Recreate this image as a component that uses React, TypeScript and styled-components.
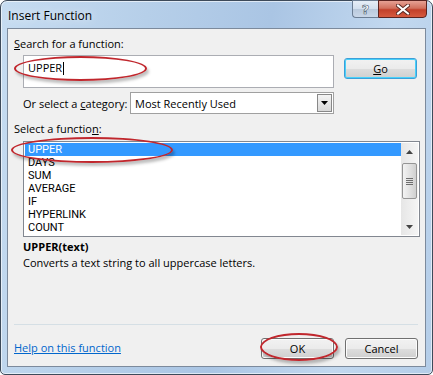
import React from 'react'
import styled, { createGlobalStyle } from 'styled-components';

const Global = createGlobalStyle`
    html, body {
        margin: 0;
        padding: 0;
        background: #ffffff;
    }
    body {
        font-family: "Open Sans", "Noto Sans", sans-serif;
        font-size: 11px;
        color: #000;
    }
`;

const functions = ['UPPER', 'DAYS', 'SUM', 'AVERAGE', 'IF', 'HYPERLINK', 'COUNT'];

const App = () => {
  return (
    <>
      <Global />
      <Window>
        <TitleBar>
          <Title>Insert Function</Title>
          <Caption>
            <CaptionButton>?</CaptionButton>
            <CloseButton>
              <svg width="14" height="11" viewBox="0 0 14 11">
                <path d="M2 1.5 L12 9.5 M12 1.5 L2 9.5" stroke="#5a2a24" strokeWidth="4" strokeLinecap="square" />
                <path d="M2 1.5 L12 9.5 M12 1.5 L2 9.5" stroke="#fff" strokeWidth="2" strokeLinecap="square" />
              </svg>
            </CloseButton>
          </Caption>
        </TitleBar>
        <Client>
          <Label><u>S</u>earch for a function:</Label>
          <SearchRow>
            <SearchBox>
              <SearchText>UPPER<Caret /></SearchText>
              <Ellipse $left={-10} $top={0} $width={133} $height={25} />
            </SearchBox>
            <Button $focused><u>G</u>o</Button>
          </SearchRow>
          <CategoryRow>
            <span>Or select a <u>c</u>ategory:</span>
            <Select>
              <SelectText>Most Recently Used</SelectText>
              <DropButton>
                <svg width="7" height="4" viewBox="0 0 7 4"><path d="M0 0 H7 L3.5 4 Z" fill="#000" /></svg>
              </DropButton>
            </Select>
          </CategoryRow>
          <Label $top={7}>Select a functio<u>n</u>:</Label>
          <ListBox>
            <Rows>
              {functions.map((f, i) => (
                <Row key={f} $selected={i === 0}>{f}</Row>
              ))}
              <Ellipse $left={-14} $top={-6} $width={162} $height={26} />
            </Rows>
            <ScrollBar>
              <Arrow>
                <svg width="7" height="4" viewBox="0 0 7 4"><path d="M0 4 H7 L3.5 0 Z" fill="#444" /></svg>
              </Arrow>
              <Track>
                <Thumb>
                  <Grip />
                  <Grip />
                  <Grip />
                  <Grip />
                </Thumb>
              </Track>
              <Arrow>
                <svg width="7" height="4" viewBox="0 0 7 4"><path d="M0 0 H7 L3.5 4 Z" fill="#444" /></svg>
              </Arrow>
            </ScrollBar>
          </ListBox>
          <Signature>UPPER(text)</Signature>
          <Description>Converts a text string to all uppercase letters.</Description>
          <Spacer />
          <Separator />
          <Footer>
            <HelpLink href="#">Help on this function</HelpLink>
            <Buttons>
              <OkWrap>
                <Button>OK</Button>
                <Ellipse $left={-1} $top={-5} $width={78} $height={28} />
              </OkWrap>
              <Button>Cancel</Button>
            </Buttons>
          </Footer>
        </Client>
      </Window>
    </>
  )
}

export default App;

const Window = styled.div`
    width: 433px;
    height: 375px;
    box-sizing: border-box;
    border: 1px solid #3d4a5a;
    border-radius: 7px 7px 5px 5px;
    background: linear-gradient(100deg, #c6dcf1 0%, #b6cfe9 30%, #aac5e4 55%, #c2d8ef 80%, #b4cde8 100%);
    padding: 0 6px 7px 6px;
    display: flex;
    flex-direction: column;
    box-shadow: inset 0 0 0 1px rgba(255,255,255,0.6);
`;
const TitleBar = styled.div`
    height: 27px;
    display: flex;
    justify-content: space-between;
    align-items: flex-start;
`;
const Title = styled.div`
    padding: 6px 0 0 1px;
    font-family: "Open Sans", "Noto Sans", sans-serif;
    font-size: 12px;
    color: #000;
    text-shadow: 0 0 8px rgba(255,255,255,0.9);
`;
const Caption = styled.div`
    display: flex;
    margin-top: -1px;
    margin-right: -1px;
`;
const CaptionButton = styled.div`
    width: 26px;
    height: 18px;
    box-sizing: border-box;
    border: 1px solid #6b7d93;
    border-right: none;
    border-radius: 0 0 0 4px;
    background: linear-gradient(#e6eef7 0%, #d2dfee 50%, #b9c9dc 51%, #c9d7e8 100%);
    display: flex;
    align-items: center;
    justify-content: center;
    font-family: "DejaVu Sans", sans-serif;
    font-size: 13px;
    font-weight: bold;
    color: #fff;
    -webkit-text-stroke: 0.6px #4a5a6e;
`;
const CloseButton = styled.div`
    width: 49px;
    height: 18px;
    box-sizing: border-box;
    border: 1px solid #5a2320;
    border-radius: 0 0 4px 0;
    background: linear-gradient(#e6a194 0%, #d1705d 45%, #c2402a 55%, #d65a3f 100%);
    display: flex;
    align-items: center;
    justify-content: center;
`;
const Client = styled.div`
    flex: 1;
    border: 1px solid #7c8a9c;
    background: #f0f0f0;
    padding: 0 6px 0 6px;
    display: flex;
    flex-direction: column;
`;
const Label = styled.div<{ $top?: number }>`
    margin-top: ${p => p.$top ?? 7}px;
    line-height: 16px;
`;
const SearchRow = styled.div`
    display: flex;
    align-items: flex-start;
    margin-top: 3px;
    padding-left: 9px;
    gap: 10px;
`;
const SearchBox = styled.div`
    position: relative;
    width: 311px;
    height: 33px;
    box-sizing: border-box;
    border: 1px solid #abadb3;
    background: #fff;
`;
const SearchText = styled.div`
    padding: 4px 0 0 4px;
    line-height: 16px;
    display: flex;
    align-items: center;
`;
const Caret = styled.span`
    display: inline-block;
    width: 1px;
    height: 13px;
    background: #000;
    margin-left: 1px;
`;
const Ellipse = styled.div<{ $left: number; $top: number; $width: number; $height: number }>`
    position: absolute;
    left: ${p => p.$left}px;
    top: ${p => p.$top}px;
    width: ${p => p.$width}px;
    height: ${p => p.$height}px;
    box-sizing: border-box;
    border: 2px solid #c0272d;
    border-radius: 50%;
    box-shadow: 2px 3px 3px rgba(0,0,0,0.25);
    pointer-events: none;
`;
const Button = styled.div<{ $focused?: boolean }>`
    width: 73px;
    height: 21px;
    box-sizing: border-box;
    border: 1px solid ${p => p.$focused ? '#3c9fd8' : '#707070'};
    border-radius: 3px;
    background: linear-gradient(#f2f2f2 0%, #ebebeb 50%, #dddddd 51%, #cfcfcf 100%);
    box-shadow: inset 0 0 0 1px ${p => p.$focused ? '#48d1fa' : '#fcfcfc'};
    display: flex;
    align-items: center;
    justify-content: center;
    margin-top: ${p => p.$focused ? '3px' : '0'};
`;
const CategoryRow = styled.div`
    width: 311px;
    display: flex;
    align-items: center;
    justify-content: space-between;
    margin-top: 4px;
    margin-left: 9px;
`;
const Select = styled.div`
    width: 204px;
    height: 22px;
    box-sizing: border-box;
    border: 1px solid #a0a0a0;
    background: #fff;
    display: flex;
    align-items: center;
    justify-content: space-between;
    padding: 1px;
`;
const SelectText = styled.span`
    padding-left: 3px;
`;
const DropButton = styled.div`
    width: 15px;
    height: 18px;
    box-sizing: border-box;
    border: 1px solid #888;
    background: linear-gradient(#f4f4f4, #d8d8d8);
    display: flex;
    align-items: center;
    justify-content: center;
`;
const ListBox = styled.div`
    margin: 4px 0 0 9px;
    width: 397px;
    height: 96px;
    box-sizing: border-box;
    border: 1px solid #828790;
    background: #fff;
    display: flex;
    padding: 1px;
`;
const Rows = styled.div`
    position: relative;
    flex: 1;
    display: flex;
    flex-direction: column;
`;
const Row = styled.div<{ $selected?: boolean }>`
    height: 13px;
    line-height: 13px;
    padding-left: 3px;
    font-family: Roboto, "Open Sans", sans-serif;
    font-size: 11px;
    background: ${p => p.$selected ? '#3399ff' : 'transparent'};
    color: ${p => p.$selected ? '#fff' : '#000'};
`;
const ScrollBar = styled.div`
    width: 17px;
    display: flex;
    flex-direction: column;
    background: linear-gradient(90deg, #e6e6e6, #f5f5f5);
`;
const Arrow = styled.div`
    height: 17px;
    display: flex;
    align-items: center;
    justify-content: center;
`;
const Track = styled.div`
    flex: 1;
    padding-top: 3px;
`;
const Thumb = styled.div`
    width: 15px;
    height: 36px;
    margin-left: 1px;
    box-sizing: border-box;
    border: 1px solid #959595;
    border-radius: 2px;
    background: linear-gradient(90deg, #f3f3f3, #e2e2e2 50%, #d0d0d0);
    display: flex;
    flex-direction: column;
    align-items: center;
    justify-content: center;
    gap: 1px;
`;
const Grip = styled.div`
    width: 7px;
    height: 1px;
    background: #6e6e6e;
`;
const Signature = styled.div`
    margin: 2px 0 0 9px;
    font-weight: bold;
    line-height: 15px;
`;
const Description = styled.div`
    margin: 1px 0 0 9px;
    line-height: 15px;
`;
const Spacer = styled.div`
    flex: 1;
`;
const Separator = styled.div`
    height: 1px;
    background: #d5dfe5;
    margin: 0 1px 0 0;
`;
const Footer = styled.div`
    display: flex;
    justify-content: space-between;
    align-items: center;
    padding: 13px 0 7px 0;
`;
const HelpLink = styled.a`
    color: #0066cc;
    text-decoration: underline;
    margin-top: -3px;
`;
const Buttons = styled.div`
    display: flex;
    gap: 11px;
    margin-right: 1px;
`;
const OkWrap = styled.div`
    position: relative;
`;
